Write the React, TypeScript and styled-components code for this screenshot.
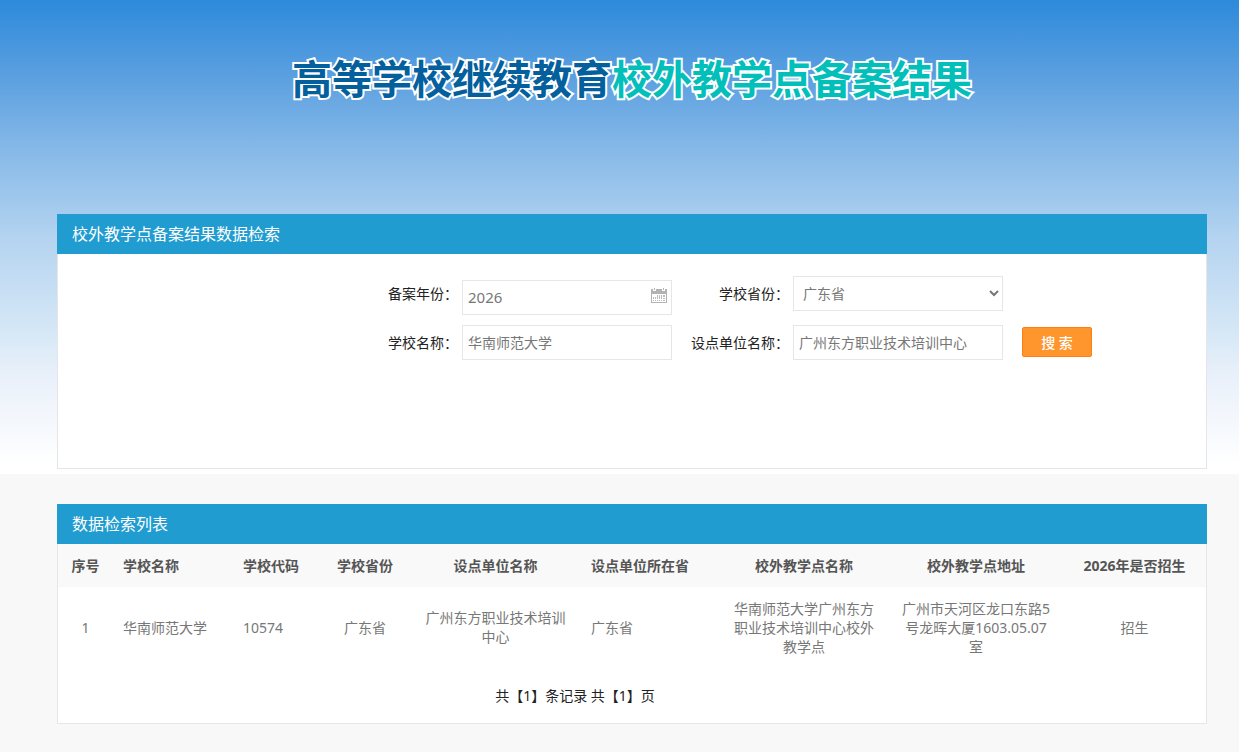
import React from "react";
import styled, { createGlobalStyle } from "styled-components";

const GlobalStyle = createGlobalStyle`
  *, *::before, *::after { box-sizing: border-box; }
  body {
    margin: 0;
    background: #f8f8f8;
    color: #222;
    font-family: "Noto Sans", "Noto Sans CJK SC", sans-serif;
    font-size: 14px;
    line-height: 19px;
  }
`;

const Hero = styled.header`
  height: 474px;
  padding: 47px 32px 0 57px;
  background: linear-gradient(
    #2d8adb 0,
    #5a9fe0 75px,
    #86b9e8 150px,
    #b5d4f0 240px,
    #d5e7f6 330px,
    #e9f0fa 375px,
    #fff 465px
  );
`;

const Title = styled.h1`
  margin: 0 0 107px;
  font-family: "Noto Sans CJK SC", sans-serif;
  font-size: 40px;
  line-height: 60px;
  font-weight: 700;
  text-align: center;
  white-space: nowrap;
  color: #03609c;
  -webkit-text-stroke: 4px #fff;
  paint-order: stroke fill;
`;

const TitleAccent = styled.span`
  color: #02bfba;
`;

const Results = styled.main`
  padding: 30px 32px 28px 57px;
`;

const PanelTitle = styled.h2`
  margin: 0;
  padding: 0 15px;
  background: #209cd0;
  color: #fff;
  font-size: 16px;
  line-height: 40px;
  font-weight: 400;
`;

const PanelBody = styled.div<{ $height: number }>`
  min-height: ${(p) => p.$height}px;
  background: #fff;
  border: 1px solid #e6e6e6;
  border-top: 0;
`;

const SearchForm = styled.form`
  display: grid;
  grid-template-columns: max-content 210px max-content 210px max-content;
  row-gap: 10px;
  padding: 22px 0 0 330px;
`;

const Label = styled.label<{ $spaced?: boolean }>`
  padding-right: 4px;
  margin-left: ${(p) => (p.$spaced ? 19 : 0)}px;
  line-height: 35px;
  text-align: right;
  white-space: nowrap;
`;

const TextInput = styled.input`
  width: 100%;
  height: 35px;
  padding: 0 5px 2px;
  border: 1px solid #e6e6e6;
  border-radius: 0;
  background: #fff;
  color: #777;
  font: inherit;
  outline: none;
`;

const DateField = styled.div`
  position: relative;
  padding-top: 4px;

  input {
    font-size: 15px;
    padding-right: 26px;
  }

  svg {
    position: absolute;
    top: 12px;
    right: 5px;
    pointer-events: none;
  }
`;

const Select = styled.select`
  width: 100%;
  height: 35px;
  padding: 0 5px;
  border: 1px solid #e6e6e6;
  border-radius: 0;
  background: #fff;
  color: #777;
  font: inherit;
  outline: none;
`;

const SearchButton = styled.button`
  width: 70px;
  height: 30px;
  margin: 2px 0 0 19px;
  padding: 0;
  border: 1px solid #ff7e12;
  border-radius: 2px;
  background: #ff952d;
  color: #fff;
  font: inherit;
  font-weight: 500;
  cursor: pointer;
`;

const FormBreak = styled.span``;

const DataTable = styled.table`
  width: 100%;
  table-layout: fixed;
  border-collapse: collapse;
  color: #777;
`;

type CellProps = { $left?: boolean };

const HeadCell = styled.th<CellProps>`
  height: 43px;
  padding: 0 10px;
  background: #f9f9f9;
  color: #555;
  font-weight: 700;
  text-align: ${(p) => (p.$left ? "left" : "center")};
  white-space: nowrap;
`;

const Cell = styled.td<CellProps>`
  height: 80px;
  padding: 10px;
  text-align: ${(p) => (p.$left ? "left" : "center")};
  vertical-align: middle;
`;

const Pager = styled.p`
  margin: 0;
  padding: 19px 114px 18px 0;
  text-align: center;
`;

const columns = [
  { title: "序号", width: 55 },
  { title: "学校名称", width: 120, left: true },
  { title: "学校代码", width: 87, left: true },
  { title: "学校省份", width: 90 },
  { title: "设点单位名称", width: 171 },
  { title: "设点单位所在省", width: 138, left: true },
  { title: "校外教学点名称", width: 170 },
  { title: "校外教学点地址", width: 174 },
  { title: "2026年是否招生", width: 143 },
];

const rows = [
  [
    "1",
    "华南师范大学",
    "10574",
    "广东省",
    "广州东方职业技术培训中心",
    "广东省",
    "华南师范大学广州东方职业技术培训中心校外教学点",
    "广州市天河区龙口东路5号龙晖大厦1603.05.07室",
    "招生",
  ],
];

const CalendarIcon = () => (
  <svg width="16" height="16" viewBox="0 0 16 16" shapeRendering="crispEdges" aria-hidden="true">
    <path fill="#b3b3b3" d="M0 1h2v2h3V1h6v2h3V1h2v5H0z" />
    <path fill="#b3b3b3" d="M3 0h1v2H3zM12 0h1v2h-1z" />
    <path fill="#b3b3b3" d="M0 6h1v9H0zM15 6h1v9h-1zM0 14h16v1H0z" />
    <path
      fill="#bdbdbd"
      d="M6 7h1v2H6zM8 7h1v2H8zM10 7h1v2h-1zM12 7h2v2h-2zM4 9h1v2H4zM2 9h1v2H2zM6 9h1v2H6zM8 9h1v2H8zM10 9h1v2h-1zM12 10h2v1h-2zM2 12h1v1H2zM4 12h1v1H4zM6 12h1v1H6zM8 12h1v1H8zM10 12h1v1h-1zM12 12h2v1h-2z"
    />
  </svg>
);

export default function App() {
  return (
    <>
      <GlobalStyle />
      <Hero>
        <Title>
          高等学校继续教育<TitleAccent>校外教学点备案结果</TitleAccent>
        </Title>
        <section>
          <PanelTitle>校外教学点备案结果数据检索</PanelTitle>
          <PanelBody $height={215}>
            <SearchForm onSubmit={(e) => e.preventDefault()}>
              <Label htmlFor="year">备案年份：</Label>
              <DateField>
                <TextInput id="year" defaultValue="2026" />
                <CalendarIcon />
              </DateField>
              <Label htmlFor="province" $spaced>学校省份：</Label>
              <Select id="province" defaultValue="广东省">
                <option>广东省</option>
              </Select>
              <FormBreak />
              <Label htmlFor="school">学校名称：</Label>
              <TextInput id="school" defaultValue="华南师范大学" />
              <Label htmlFor="unit" $spaced>设点单位名称：</Label>
              <TextInput id="unit" defaultValue="广州东方职业技术培训中心" />
              <SearchButton type="submit">搜 索</SearchButton>
            </SearchForm>
          </PanelBody>
        </section>
      </Hero>
      <Results>
        <PanelTitle>数据检索列表</PanelTitle>
        <PanelBody $height={180}>
          <DataTable>
            <colgroup>
              {columns.map((c) => (
                <col key={c.title} width={c.width} />
              ))}
            </colgroup>
            <thead>
              <tr>
                {columns.map((c) => (
                  <HeadCell key={c.title} $left={c.left} scope="col">{c.title}</HeadCell>
                ))}
              </tr>
            </thead>
            <tbody>
              {rows.map((row) => (
                <tr key={row[0]}>
                  {row.map((value, i) => (
                    <Cell key={columns[i].title} $left={columns[i].left}>{value}</Cell>
                  ))}
                </tr>
              ))}
            </tbody>
          </DataTable>
          <Pager>共【1】条记录 共【1】页</Pager>
        </PanelBody>
      </Results>
    </>
  );
}
